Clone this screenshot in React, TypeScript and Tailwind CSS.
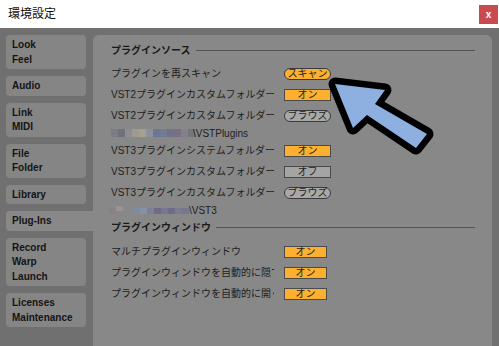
const tabs: { lines: string[]; selected?: boolean }[] = [
  { lines: ["Look", "Feel"] },
  { lines: ["Audio"] },
  { lines: ["Link", "MIDI"] },
  { lines: ["File", "Folder"] },
  { lines: ["Library"] },
  { lines: ["Plug-Ins"], selected: true },
  { lines: ["Record", "Warp", "Launch"] },
  { lines: ["Licenses", "Maintenance"] },
];

const mosaic1 = [
  "#7c7c84",
  "#70727a",
  "#8e8e8e",
  "#9d9a8e",
  "#a8a08a",
  "#8d919b",
  "#6d7792",
  "#737b93",
  "#707289",
  "#7b7083",
  "#84808c",
  "#76767a",
];

const mosaic2a = ["#8c8088", "#9a9292"];
const mosaic2b = [
  "#7f8ba1",
  "#8890a8",
  "#7d8096",
  "#6f6b82",
  "#7a7692",
  "#6c6e88",
  "#7d7a90",
  "#75788c",
];

const jp = "font-['Liberation_Sans','Noto_Sans_CJK_JP',sans-serif]";

function Toggle({ on, wide = true }: { on: boolean; wide?: boolean }) {
  return (
    <div
      className={`${wide ? "w-[47px]" : "w-[43px]"} h-[12px] border border-[#4a4a4a] flex items-center justify-center text-[10px] leading-none text-[#1e1e1e] ${
        on ? "bg-[#fdb02f]" : "bg-[#a4a4a4]"
      }`}
    >
      {on ? "オン" : "オフ"}
    </div>
  );
}

function Pill({ label, orange }: { label: string; orange?: boolean }) {
  return (
    <div
      className={`w-[47px] h-[12px] rounded-full border border-[#3a3a3a] flex items-center justify-center text-[10px] leading-none text-[#1e1e1e] ${
        orange ? "bg-[#fdb02f]" : "bg-[#a8a8a8]"
      }`}
    >
      {label}
    </div>
  );
}

function Row({ label, children }: { label: string; children: React.ReactNode }) {
  return (
    <div className="h-[21px] flex items-center">
      <div className="w-[163px] mr-[10px] whitespace-nowrap overflow-hidden text-[10px] text-[#1e1e1e]">
        {label}
      </div>
      {children}
    </div>
  );
}

function Heading({ text, className = "" }: { text: string; className?: string }) {
  return (
    <div className={`h-[14px] flex items-center gap-[5px] ${className}`}>
      <span className="text-[10px] font-bold text-[#1a1a1a] whitespace-nowrap">{text}</span>
      <div className="flex-1 h-px bg-[#555555]" />
    </div>
  );
}

export default function App() {
  return (
    <div className={`relative w-[499px] h-[346px] bg-[#707070] flex flex-col overflow-hidden ${jp}`}>
      <div className="h-[28px] bg-white flex items-center justify-between pl-[8px] pr-[1px]">
        <span className="text-[12px] text-[#111]">環境設定</span>
        <div className="w-[19px] h-[19px] bg-[#c94b4e] text-white text-[10px] font-bold flex items-center justify-center">
          x
        </div>
      </div>

      <div className="flex flex-1 pt-[7px] pl-[6px]">
        <div className="w-[80px] flex flex-col gap-[7px]">
          {tabs.map((t) => (
            <div
              key={t.lines[0]}
              className={`relative pl-[6px] pt-[3px] pb-[2px] text-[10px] font-bold leading-[14.5px] text-[#141414] font-['Liberation_Sans',sans-serif] ${
                t.selected
                  ? "bg-[#888888] rounded-l-[4px] mr-[-7px] z-10"
                  : "bg-[#858585] rounded-[4px]"
              }`}
            >
              {t.lines.map((l) => (
                <div key={l}>{l}</div>
              ))}
            </div>
          ))}
        </div>

        <div className="ml-[7px] w-[399px] bg-[#888888] rounded-t-[6px] pt-[8px] pl-[18px] pr-[17px]">
          <Heading text="プラグインソース" />
          <div className="mt-[6px]">
            <Row label="プラグインを再スキャン">
              <Pill label="スキャン" orange />
            </Row>
            <Row label="VST2プラグインカスタムフォルダー">
              <Toggle on />
            </Row>
            <Row label="VST2プラグインカスタムフォルダー">
              <Pill label="ブラウズ" />
            </Row>
            <div className="h-[14px] flex items-center">
              <div className="flex h-[8px]">
                {mosaic1.map((c, i) => (
                  <div key={i} className="w-[7px] h-[8px]" style={{ background: c }} />
                ))}
              </div>
              <span className="text-[10px] text-[#1e1e1e] -ml-[2px]">\VSTPlugins</span>
            </div>
            <Row label="VST3プラグインシステムフォルダー">
              <Toggle on />
            </Row>
            <Row label="VST3プラグインカスタムフォルダー">
              <Toggle on={false} />
            </Row>
            <Row label="VST3プラグインカスタムフォルダー">
              <Pill label="ブラウズ" />
            </Row>
            <div className="h-[14px] flex items-center">
              <div className="flex items-end h-[8px] -ml-[2px]">
                {mosaic2a.map((c, i) => (
                  <div key={i} className={`w-[7px] ${i ? "h-[5px] self-start" : "h-[6px]"}`} style={{ background: c }} />
                ))}
              </div>
              <div className="flex h-[8px] ml-[10px]">
                {mosaic2b.map((c, i) => (
                  <div key={i} className="w-[7px] h-[6px] mt-[2px]" style={{ background: c }} />
                ))}
              </div>
              <span className="text-[10px] text-[#1e1e1e]">\VST3</span>
            </div>
          </div>

          <Heading text="プラグインウィンドウ" className="mt-[3px]" />
          <div className="mt-[7px]">
            <Row label="マルチプラグインウィンドウ">
              <Toggle on wide={false} />
            </Row>
            <Row label="プラグインウィンドウを自動的に隠す">
              <Toggle on wide={false} />
            </Row>
            <Row label="プラグインウィンドウを自動的に開く">
              <Toggle on wide={false} />
            </Row>
          </div>
        </div>
      </div>

      <svg
        className="absolute left-0 top-0 pointer-events-none"
        width="499"
        height="346"
        viewBox="0 0 499 346"
      >
        <polygon
          points="335,84 385,90 375,104 427,134 416,148 367,115 353,128"
          fill="#8db0e0"
          stroke="#000"
          strokeWidth="13"
          strokeLinejoin="round"
          paintOrder="stroke"
        />
      </svg>
    </div>
  );
}
